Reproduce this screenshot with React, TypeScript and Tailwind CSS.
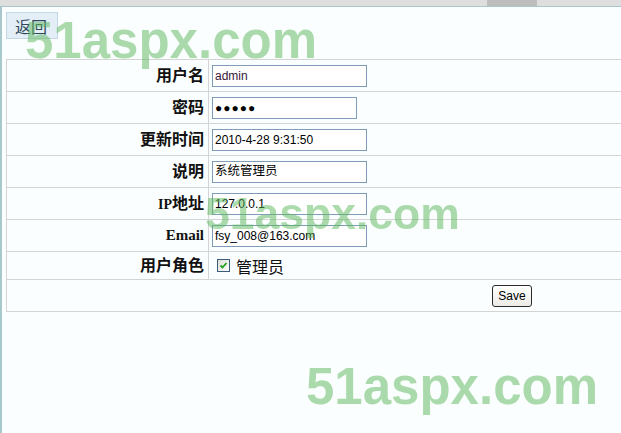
import React from "react";

const cjk = '"Liberation Serif", "Noto Sans CJK SC", serif';
const inputFont = '"Liberation Sans", "Noto Sans CJK SC", sans-serif';

function Field({ value, width, color = "#000", size = "12px", password = false }: { value: string; width: number; color?: string; size?: string; password?: boolean }) {
  return (
    <div
      className="h-[22px] border border-[#7f9db9] bg-white flex items-center pl-[2px] whitespace-nowrap overflow-hidden"
      style={{ width, fontFamily: inputFont }}
    >
      {password ? (
        <span className="text-[12px] tracking-[1px] text-black leading-none">●●●●●</span>
      ) : (
        <span style={{ color, fontSize: size }}>{value}</span>
      )}
    </div>
  );
}

function Row({ label, children, h = "h-[32px]" }: { label: React.ReactNode; children: React.ReactNode; h?: string }) {
  return (
    <div className={`flex ${h} border-b border-[#d4d4d4]`}>
      <div
        className="w-[202px] shrink-0 border-r border-[#d4d4d4] flex items-center justify-end pr-[4px] text-[16px] font-bold text-[#111]"
        style={{ fontFamily: cjk }}
      >
        {label}
      </div>
      <div className="flex items-center pl-[3px]">{children}</div>
    </div>
  );
}

export default function App() {
  return (
    <div className="relative w-[621px] h-[433px] overflow-hidden bg-[#fbfefe]">
      {/* top strip */}
      <div className="relative h-[7px] bg-[#dedede] border-b border-[#a9c6cc]">
        <div className="absolute left-[487px] top-0 w-[50px] h-[6px] bg-[#bdbdbd]" />
      </div>
      <div className="flex">
        <div className="w-[2px] shrink-0 bg-[#a9c8cc] h-[426px]" />
        <div className="flex-1 pl-[4px]">
          <div className="pt-[5px]">
            <div
              className="w-[52px] h-[27px] bg-[#e3eef6] border border-[#c3d7e6] flex items-center justify-center pr-[2px] text-[16px] text-[#2c4a5a]"
              style={{ fontFamily: '"Noto Sans CJK SC", sans-serif' }}
            >
              返回
            </div>
          </div>
          <div className="mt-[20px] w-[1012px] border-l border-t border-[#d4d4d4]">
            <Row label="用户名">
              <Field value="admin" width={155} color="#3a1638" />
            </Row>
            <Row label="密码">
              <Field value="" width={145} password />
            </Row>
            <Row label="更新时间">
              <Field value="2010-4-28 9:31:50" width={155} />
            </Row>
            <Row label="说明">
              <Field value="系统管理员" width={155} size="12.5px" />
            </Row>
            <Row label={<span><span className="text-[14px]">IP</span>地址</span>}>
              <Field value="127.0.0.1" width={155} />
            </Row>
            <Row label={<span className="text-[15px]">Email</span>}>
              <Field value="fsy_008@163.com" width={155} />
            </Row>
            <Row label="用户角色" h="h-[28px]">
              <div className="flex items-center pl-[5px]">
                <span className="w-[13px] h-[13px] border border-[#3b5b7b] bg-gradient-to-br from-[#dcdcd4] to-white flex items-center justify-center">
                  <svg width="9" height="9" viewBox="0 0 9 9">
                    <path d="M1.5 4.5 L3.5 6.5 L7.5 2" stroke="#21a121" strokeWidth="1.8" fill="none" />
                  </svg>
                </span>
                <span
                  className="ml-[6px] text-[16px] text-[#111]"
                  style={{ fontFamily: '"Noto Sans CJK SC", sans-serif' }}
                >
                  管理员
                </span>
              </div>
            </Row>
            <div className="flex h-[32px] border-b border-[#d4d4d4] items-center pl-[485px]">
              <div
                className="w-[40px] h-[22px] border border-[#2a2a2a] rounded-[3px] bg-gradient-to-b from-white to-[#ecebe6] flex items-center justify-center text-[12px] text-black"
                style={{ fontFamily: inputFont }}
              >
                Save
              </div>
            </div>
          </div>
        </div>
      </div>
      {/* watermarks */}
      {[
        { l: 25, t: 15, s: 51 },
        { l: 205, t: 192, s: 44.5 },
        { l: 306, t: 361, s: 51 },
      ].map((w, i) => (
        <div
          key={i}
          className="absolute pointer-events-none font-bold leading-none text-[#5cb85c] opacity-50 blur-[0.6px] whitespace-nowrap"
          style={{ left: w.l, top: w.t, fontSize: w.s, fontFamily: '"Liberation Sans", sans-serif' }}
        >
          51aspx.com
        </div>
      ))}
    </div>
  );
}
